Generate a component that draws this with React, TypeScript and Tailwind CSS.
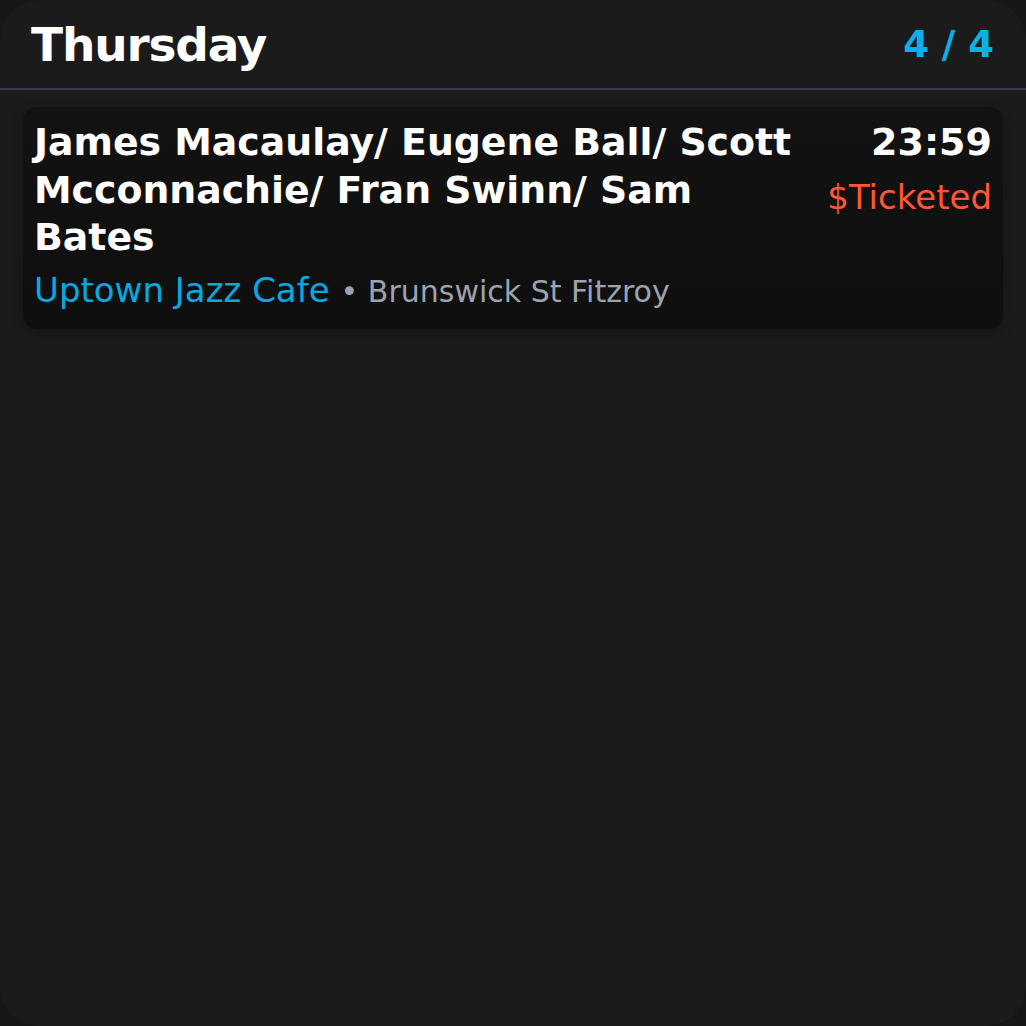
export default function App() {
  return (
    <div className="w-[1026px] h-[1026px] bg-[#171717]" style={{ fontFamily: '"DejaVu Sans", sans-serif' }}>
      <div className="h-full w-full rounded-[40px] bg-[#1b1b1b] flex flex-col">
        {/* Header */}
        <header className="flex items-center justify-between h-[90px] px-[31px] border-b-2 border-[#363b45]">
          <h1 className="text-[47px] font-bold text-white tracking-tight leading-none">Thursday</h1>
          <span className="text-[37px] font-bold text-[#08b1e8] leading-none pr-[1px]">4 / 4</span>
        </header>

        {/* Event */}
        <div className="px-[23px] pt-[17px]">
          <div className="rounded-[14px] bg-gradient-to-b from-[#121212] to-[#0f0f0f] px-[11px] pt-[12px] pb-[13px] shadow-[0_4px_12px_rgba(0,0,0,0.25)]">
            <div className="flex justify-between gap-6">
              <h2 className="text-[37.8px] font-bold text-white leading-[47.5px] max-w-[780px]">
                James Macaulay/ Eugene Ball/ Scott Mcconnachie/ Fran Swinn/ Sam Bates
              </h2>
              <div className="flex flex-col items-end shrink-0">
                <span className="text-[38px] font-bold text-white leading-[47.5px]">23:59</span>
                <span className="text-[34px] text-[#ff5733] leading-[44px] mt-[8px]">$Ticketed</span>
              </div>
            </div>
            <div className="flex items-baseline gap-[11px] mt-[4px] leading-[48px]">
              <span className="text-[34px] text-[#06a9e0]">Uptown Jazz Cafe</span>
              <span className="text-[30px] text-[#9ca3af]">• Brunswick St Fitzroy</span>
            </div>
          </div>
        </div>
      </div>
    </div>
  );
}
